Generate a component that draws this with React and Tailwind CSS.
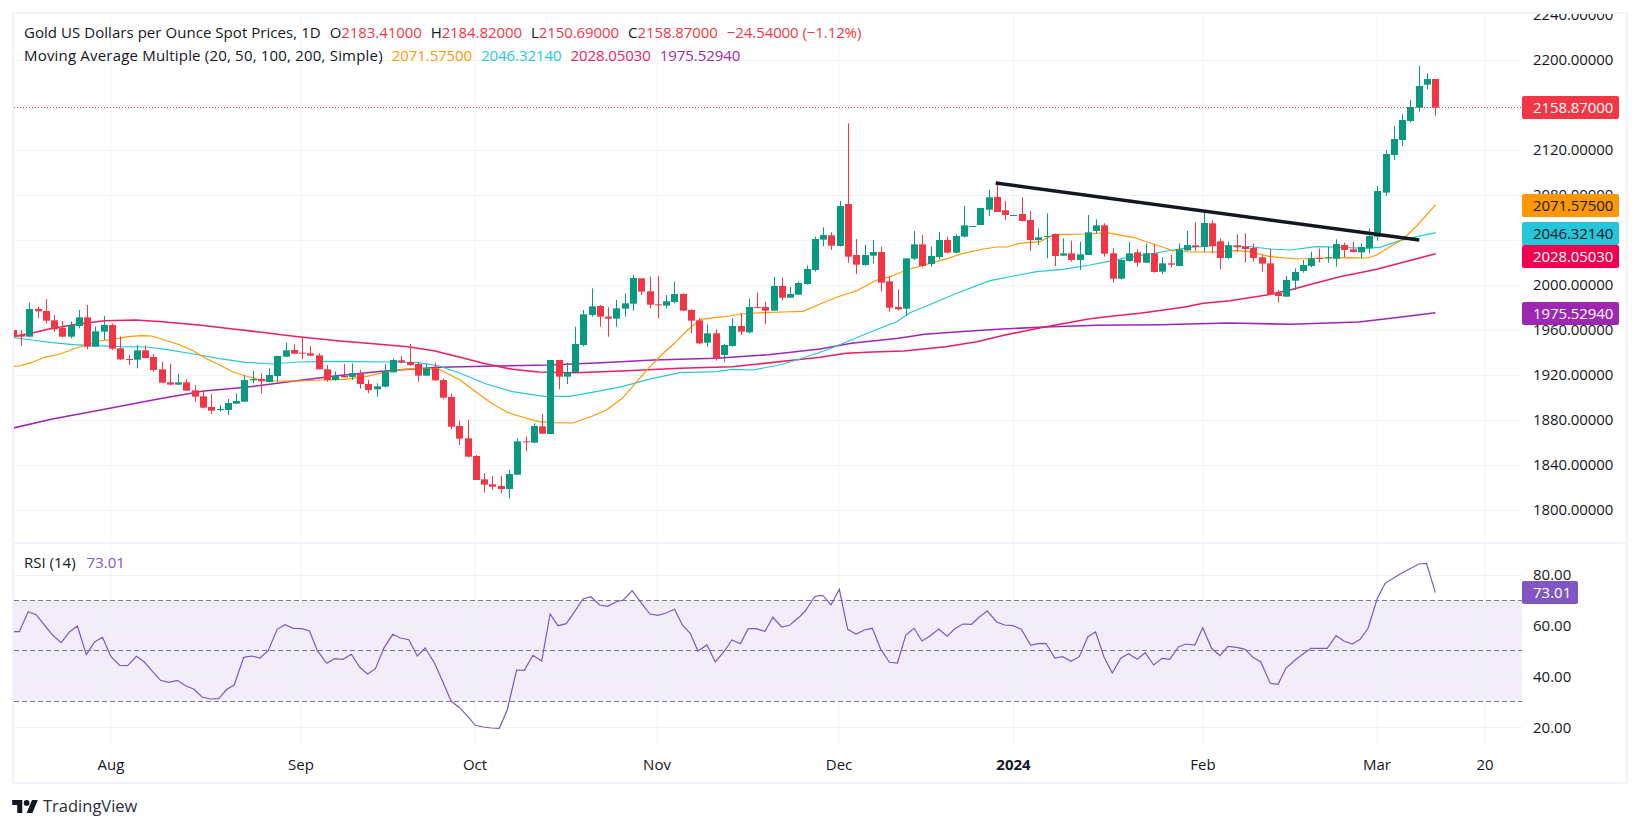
import React from "react";

const RED = "#f23645";
const GREEN = "#089981";

// candles read right to left, [up, wickTop, bodyTop, bodyBottom, wickBottom]
const candleGroups = [
  {
    y0: 60,
    rows: [
      [0,57,57,143,167],[1,40,57,74,87],[1,17,78,143,155],[1,120,141,183,188],[1,163,180,240,258],[1,198,237,285,300],
      [1,270,282,398,408],[1,378,393,530,542],[1,505,528,565,580],[1,550,561,577,594],[0,545,568,576,578],[0,548,555,570,592],
      [1,538,552,596,620],[1,560,592,595,608],[0,566,594,597,608],[1,575,595,618,622],[1,600,615,633,638],[1,625,636,662,690],
      [1,648,660,710,710],[0,690,698,708,728],[0,566,610,704,706],[0,585,592,611,635],[0,550,564,594,605],[0,520,560,567,608],
      [0,524,556,562,575],[1,545,556,594,598],[0,535,544,594,628],[0,480,490,558,580],[1,455,489,561,575],[0,487,556,561,572],
      [1,513,555,571,572],[1,550,568,618,618],[0,585,610,614,622],[1,592,610,635,642],[0,553,580,636,638],[1,550,580,608,608],
      [0,568,577,608,620],[1,545,580,603,605],[1,598,600,656,658],[0,565,580,656,668],[0,490,496,581,590],[1,478,496,513,520],
    ],
  },
  {
    y0: 120,
    rows: [
      [1,285,337,405,405],[1,365,403,420,450],[0,362,400,420,425],[1,355,400,407,407],[0,340,342,408,438],[1,280,348,351,415],
      [1,325,352,360,375],[0,272,300,360,393],[0,232,282,303,305],[1,285,285,288,288],[0,243,271,285,300],[0,190,231,276,276],
      [1,210,232,269,288],[1,264,264,315,315],[1,318,318,320,320],[1,258,316,350,352],[1,342,348,398,400],[0,350,360,398,400],
      [1,336,360,411,418],[1,380,408,432,440],[0,345,373,438,442],[1,333,373,416,420],[1,415,415,566,588],[0,508,561,568,572],
      [0,470,484,563,575],[0,380,396,488,514],[1,360,396,407,430],[1,375,405,435,437],[0,357,405,434,462],[0,10,252,410,428],
      [1,243,258,378,380],[0,337,346,377,390],[1,322,345,359,378],[1,350,357,450,455],[1,436,447,492,494],[1,484,489,524,525],
      [1,500,522,533,534],[0,473,498,533,540],[1,471,498,572,572],[0,545,561,572,612],[0,518,561,564,565],[1,536,561,637,640],
      [0,580,618,635,645],[1,595,618,678,680],
    ],
  },
  {
    y0: 270,
    rows: [
      [1,222,225,255,275],[0,178,190,265,272],[1,163,190,218,230],[0,145,151,220,222],[0,118,120,152,190],[0,70,72,122,123],
      [1,35,72,96,100],[1,75,94,107,115],[0,18,103,106,145],[0,20,64,104,115],[0,25,25,65,75],[1,15,24,101,122],
      [1,70,100,116,140],[1,90,115,146,170],[0,112,140,146,200],[0,105,108,140,170],[1,55,109,135,140],[1,120,133,225,230],
      [1,170,222,307,308],[1,278,307,320,342],[0,270,270,320,358],[1,270,270,492,492],[0,432,469,491,492],[1,460,468,518,520],
      [0,500,514,517,543],[1,505,514,614,615],[1,600,612,657,685],[0,618,648,657,670],[0,618,643,650,660],[0,610,628,644,668],
      [0,555,558,630,630],[0,450,505,560,562],[0,452,468,506,525],[0,370,381,470,478],[0,325,330,383,386],[0,278,295,331,332],
      [1,282,295,317,318],[0,278,282,317,335],[0,222,276,285,288],[0,258,271,277,280],[1,265,270,307,307],[1,283,304,350,352],
      [1,340,349,358,380],
    ],
  },
  {
    y0: 290,
    rows: [
      [0,270,282,300,310],[0,240,250,282,296],[1,220,250,261,270],[0,222,258,262,262],[1,245,258,270,272],[0,225,238,270,275],
      [0,190,196,238,238],[0,168,190,197,197],[0,140,188,191,207],[0,163,180,191,192],[1,158,181,200,202],[1,197,198,258,275],
      [1,235,255,276,277],[0,250,267,274,310],[1,243,267,271,280],[1,255,270,335,335],[1,310,333,341,342],[1,327,339,360,375],
      [1,345,357,359,365],[0,313,351,362,372],[0,305,319,353,355],[0,285,301,320,335],[0,268,277,302,302],[1,252,277,284,285],
      [0,222,277,284,285],[0,215,238,278,280],[0,192,201,240,245],[0,166,181,204,205],[1,165,181,209,235],[0,195,207,209,225],
      [0,140,175,208,210],[0,100,105,176,180],[1,78,105,125,150],[1,110,124,170,170],[0,45,82,170,178],[1,60,82,108,115],
      [1,95,105,140,145],[0,93,114,140,142],[0,75,91,118,125],[0,28,63,92,100],[0,50,57,64,85],[1,38,57,140,140],
      [0,120,135,140,167],[0,120,120,141,142],
    ],
  },
];

const candles = candleGroups
  .flatMap((g) => g.rows.map((r) => ({ up: r[0] === 1, wt: g.y0 + r[1] / 3, bt: g.y0 + r[2] / 3, bb: g.y0 + r[3] / 3, wb: g.y0 + r[4] / 3 })))
  .map((c, k) => ({ ...c, x: Math.floor(1435.7 - 8.27 * k) }));

// helpers for the points read off the crops
const wide = (pts, x0, y0) => pts.map(([x, y]) => [x0 + x / 1.9125, y0 + y / 3]);
const sharp = (pts, x0, y0) => pts.map(([x, y]) => [x0 + x / 3, y0 + y / 3]);
const toPoints = (pts) => pts.map(([x, y]) => `${x.toFixed(1)},${y.toFixed(1)}`).join(" ");

const orange = [
  ...wide([[13,260],[37,258],[60,248],[85,232],[115,222],[140,207],[165,195],[190,183],[215,178],[245,170],[270,167],[290,168],[315,180],[345,195],[370,213],[395,236],[420,255],[445,275],[470,288],[500,300],[530,303],[570,303],[620,300],[660,298],[700,290],[740,275],[770,268],[800,265],[840,268],[880,300],[910,335],[940,370],[970,397],[1000,412],[1030,425],[1060,428],[1095,429],[1130,410],[1160,390],[1190,355],[1215,310],[1240,265],[1265,225],[1290,190],[1315,150],[1340,118],[1370,112]], 0, 280),
  ...sharp([[0,588],[30,582],[100,578],[160,576],[220,574],[270,552],[330,528],[380,512],[440,480],[480,470],[530,450],[600,430],[650,416],[700,400],[760,387],[800,381],[830,381],[870,370],[930,365],[970,344],[1010,343],[1080,342]], 730, 120),
  ...sharp([[50,518],[130,532],[190,552],[250,572],[300,576],[370,576],[440,572],[480,575],[540,590],[620,597],[700,594],[780,593],[835,594],[860,585],[900,560],[940,536],[980,498],[1037,434]], 1090, 60),
];

const teal = [
  ...wide([[23,172],[60,180],[100,188],[140,194],[180,197],[230,200],[280,201],[320,209],[370,222],[420,236],[470,247],[520,252],[570,246],[620,244],[680,245],[750,246],[800,248],[840,258],[880,280],[930,312],[980,335],[1040,349],[1090,349],[1140,335],[1190,320],[1240,298],[1300,278],[1370,275],[1400,268],[1440,270],[1490,255],[1530,237],[1568,217]], 0, 280),
  ...sharp([[290,690],[340,670],[400,645],[450,625],[500,605],[540,578],[620,545],[680,520],[780,482],[850,468],[920,455],[1000,448],[1080,435]], 730, 120),
  ...sharp([[40,607],[100,595],[180,582],[250,570],[300,562],[360,558],[420,558],[480,560],[540,567],[600,570],[680,560],[760,562],[820,565],[870,562],[930,542],[980,530],[1037,518]], 1090, 60),
];

const pink = [
  ...wide([[23,170],[60,160],[100,145],[150,132],[200,122],[260,120],[310,125],[380,135],[450,148],[500,157],[570,170],[650,183],[720,192],[780,200],[830,212],[880,232],[930,252],[980,268],[1030,276],[1100,278],[1200,272],[1300,265],[1400,260],[1450,252],[1520,240],[1568,232]], 0, 280),
  ...wide([[50,220],[100,216],[160,213],[240,200],[300,185],[360,163],[430,141]], 820, 280),
  ...sharp([[0,776],[70,768],[150,760],[280,742],[340,730],[420,722],[530,705],[600,690],[680,668],[750,650],[860,628],[940,607],[1037,581]], 1090, 60),
];

const purple = [
  ...wide([[23,445],[100,417],[200,388],[300,358],[390,333],[470,322],[560,304],[640,288],[740,272],[840,262],[950,258],[1050,255],[1150,248],[1250,240],[1370,235],[1470,224],[1568,207]], 0, 280),
  ...wide([[60,190],[150,175],[200,163],[280,154],[340,148],[430,141],[530,136],[650,134],[780,129],[900,133],[1030,126],[1100,113],[1177,98]], 820, 280),
];

const rsi = [
  ...wide([[23,305],[37,305],[54,245],[69,254],[85,285],[101,316],[117,338],[133,306],[148,288],[165,374],[181,336],[196,322],[212,379],[229,406],[244,407],[261,379],[276,396],[292,425],[307,451],[323,457],[339,451],[355,467],[371,478],[387,502],[403,507],[418,506],[434,478],[448,465],[466,382],[482,378],[497,384],[513,362],[530,298],[545,284],[561,295],[577,296],[592,303],[607,362],[625,400],[640,386],[656,388],[672,373],[688,412],[703,432],[718,416],[735,352],[751,313],[766,324],[782,329],[798,378],[813,354],[831,399],[847,456],[863,514],[879,533],[895,560],[909,586],[924,591],[940,594],[955,595],[970,540],[988,420],[1003,421],[1019,376],[1036,393],[1052,252],[1067,287],[1083,281],[1099,245],[1115,207],[1130,200],[1147,225],[1162,229],[1178,216],[1192,210],[1209,182],[1226,218],[1243,252],[1258,256],[1274,249],[1290,238],[1305,285],[1320,310],[1335,363],[1352,345],[1368,396],[1384,366],[1400,330],[1416,341],[1431,296],[1446,296],[1463,304],[1478,262],[1495,291],[1510,286],[1528,262],[1540,243],[1558,200]], 0, 530),
  ...wide([[0,196],[6,197],[21,225],[37,178],[53,298],[69,312],[85,300],[100,295],[116,358],[133,397],[148,399],[164,315],[180,295],[195,333],[211,317],[227,297],[243,319],[258,296],[273,282],[290,283],[305,260],[320,243],[338,276],[353,285],[369,287],[385,298],[403,346],[417,341],[432,340],[449,384],[464,380],[480,394],[496,380],[512,321],[527,306],[543,380],[559,429],[575,385],[590,371],[607,388],[622,368],[638,405],[654,385],[669,388],[686,350],[700,342],[717,345],[732,293],[749,355],[765,377],[780,349],[797,352],[813,358],[828,382],[843,396],[861,460],[876,463],[891,415],[908,391],[923,373],[939,355],[955,355],[970,355],[987,317],[1002,333],[1018,342],[1033,328],[1048,295],[1066,205],[1081,160],[1112,130],[1145,102],[1160,100],[1177,188]], 820, 530),
];

const gridX = [111, 301, 475, 657, 839, 1013.5, 1203, 1377, 1485];
const priceGridY = [60.5, 105.5, 150.5, 195.5, 240.5, 285.5, 330.5, 375.5, 420.5, 465.5, 510.5];
const rsiGridY = [575.5, 626.5, 676.5, 727.5];
const prices = ["2240", "2200", "2160", "2120", "2080", "2040", "2000", "1960", "1920", "1880", "1840", "1800"];
const timeLabels = [
  { text: "Aug", x: 111 },
  { text: "Sep", x: 301 },
  { text: "Oct", x: 475 },
  { text: "Nov", x: 657 },
  { text: "Dec", x: 839 },
  { text: "2024", x: 1013.5, bold: true },
  { text: "Feb", x: 1203 },
  { text: "Mar", x: 1377 },
  { text: "20", x: 1485 },
];

const Tag = ({ className, children }) => (
  <div className={`absolute left-0 h-[23px] flex items-center pl-[11px] rounded-[2px] ${className}`}>{children}</div>
);

const Ohlc = ({ label, value }) => (
  <span className="mr-[9px]">
    {label}
    <span className="text-[#f23645]">{value}</span>
  </span>
);

const PriceChart = () => (
  <svg className="block" width="1508" height="528" viewBox="14 14 1508 528">
    {priceGridY.map((y) => (
      <line key={y} x1="14" x2="1522" y1={y} y2={y} stroke="#f2f4f9" />
    ))}
    {gridX.map((x) => (
      <line key={x} x1={x} x2={x} y1="14" y2="542" stroke="#f2f4f9" />
    ))}
    <polyline points={toPoints(purple)} fill="none" stroke="#9c27b0" strokeWidth="1.6" />
    <polyline points={toPoints(pink)} fill="none" stroke="#e91e63" strokeWidth="1.6" />
    <polyline points={toPoints(teal)} fill="none" stroke="#26c6da" strokeWidth="1.2" />
    <polyline points={toPoints(orange)} fill="none" stroke="#ff9800" strokeWidth="1.2" />
    {candles.map((c) => (
      <g key={c.x} fill={c.up ? GREEN : RED}>
        <rect x={c.x} y={c.wt} width="1" height={c.wb - c.wt} />
        <rect x={c.x - 3} y={c.bt} width="7" height={Math.max(c.bb - c.bt, 1)} />
      </g>
    ))}
    <line x1="14" x2="1522" y1="107.5" y2="107.5" stroke={RED} strokeDasharray="1 2" />
    <line x1="995.7" y1="183" x2="1419.3" y2="240" stroke="#131722" strokeWidth="3.4" />
  </svg>
);

const RsiChart = () => (
  <svg className="block" width="1508" height="201" viewBox="14 544 1508 201">
    <rect x="14" y="600.5" width="1508" height="101" fill="#f2eef9" />
    {rsiGridY.map((y) => (
      <line key={y} x1="14" x2="1522" y1={y} y2={y} stroke="#f0f1f6" />
    ))}
    {gridX.map((x) => (
      <line key={x} x1={x} x2={x} y1="544" y2="745" stroke="#f0f1f6" />
    ))}
    {[600.5, 650.5, 701.5].map((y) => (
      <line key={y} x1="14" x2="1522" y1={y} y2={y} stroke="#787b86" strokeDasharray="5 3" />
    ))}
    <polyline points={toPoints(rsi)} fill="none" stroke="#7e57c2" strokeWidth="1.2" />
  </svg>
);

export default function App() {
  return (
    <div className="w-[1640px] h-[829px] bg-white overflow-hidden pt-3 pl-3 font-['Open_Sans',sans-serif] text-[15px] text-[#131722]">
      <div className="w-[1616px] h-[772px] border-2 border-[#f0f3fa] flex flex-col">
        <div className="h-[528px] flex">
          <div className="relative w-[1508px]">
            <PriceChart />
            <div className="absolute top-[7px] left-[10px] leading-[23px] whitespace-nowrap">
              <div className="flex tracking-[-0.08px]">
                <span className="mr-[9px] tracking-[0.05px]">Gold US Dollars per Ounce Spot Prices, 1D</span>
                <Ohlc label="O" value="2183.41000" />
                <Ohlc label="H" value="2184.82000" />
                <Ohlc label="L" value="2150.69000" />
                <Ohlc label="C" value="2158.87000" />
                <span className="text-[#f23645]">−24.54000 (−1.12%)</span>
              </div>
              <div className="flex gap-[9px] tracking-[-0.08px]">
                <span className="tracking-[0.19px]">Moving Average Multiple (20, 50, 100, 200, Simple)</span>
                <span className="text-[#ff9800]">2071.57500</span>
                <span className="text-[#26c6da]">2046.32140</span>
                <span className="text-[#e91e63]">2028.05030</span>
                <span className="text-[#9c27b0]">1975.52940</span>
              </div>
            </div>
          </div>
          <div className="relative flex-1 overflow-hidden tracking-[-0.08px]">
            <div className="-mt-[22px] flex flex-col">
              {prices.map((p) => (
                <div key={p} className="h-[45px] shrink-0 flex items-center pl-[11px]">
                  {p}.00000
                </div>
              ))}
            </div>
            <Tag className="top-[82px] w-[97px] bg-[#f23645] text-white">2158.87000</Tag>
            <Tag className="top-[180px] w-[97px] bg-[#ff9800]">2071.57500</Tag>
            <Tag className="top-[208px] w-[97px] bg-[#26c6da]">2046.32140</Tag>
            <Tag className="top-[231px] w-[97px] bg-[#f0004f] text-white">2028.05030</Tag>
            <Tag className="top-[288px] w-[97px] bg-[#9c27b0] text-white">1975.52940</Tag>
          </div>
        </div>
        <div className="h-[203px] border-t-2 border-[#f0f3fa] flex">
          <div className="relative w-[1508px]">
            <RsiChart />
            <div className="absolute top-[7px] left-[10px] leading-[23px] flex gap-[11px]">
              <span>RSI (14)</span>
              <span className="text-[#7e57c2]">73.01</span>
            </div>
          </div>
          <div className="relative flex-1 overflow-hidden">
            <div className="pt-[5px] flex flex-col">
              {["80", "60", "40", "20"].map((p) => (
                <div key={p} className="h-[51px] shrink-0 flex items-center pl-[11px]">
                  {p}.00
                </div>
              ))}
            </div>
            <Tag className="top-[37px] w-[56px] bg-[#7e57c2] text-white">73.01</Tag>
          </div>
        </div>
        <div className="relative flex-1">
          {timeLabels.map((t) => (
            <span
              key={t.text}
              className={`absolute top-[8px] -translate-x-1/2 ${t.bold ? "font-bold" : ""}`}
              style={{ left: t.x - 14 }}
            >
              {t.text}
            </span>
          ))}
        </div>
      </div>
      <div className="mt-3 flex items-center gap-[5px] text-[16.5px] leading-[20px] text-[#2a2e39]">
        <svg width="26" height="13" viewBox="0 4 35.5 18" fill="#131722">
          <path d="M14 22H7V11H0V4h14v18ZM28 22h-8l7.5-18h8L28 22Z" />
          <circle cx="20" cy="8" r="4" />
        </svg>
        <span>TradingView</span>
      </div>
    </div>
  );
}
